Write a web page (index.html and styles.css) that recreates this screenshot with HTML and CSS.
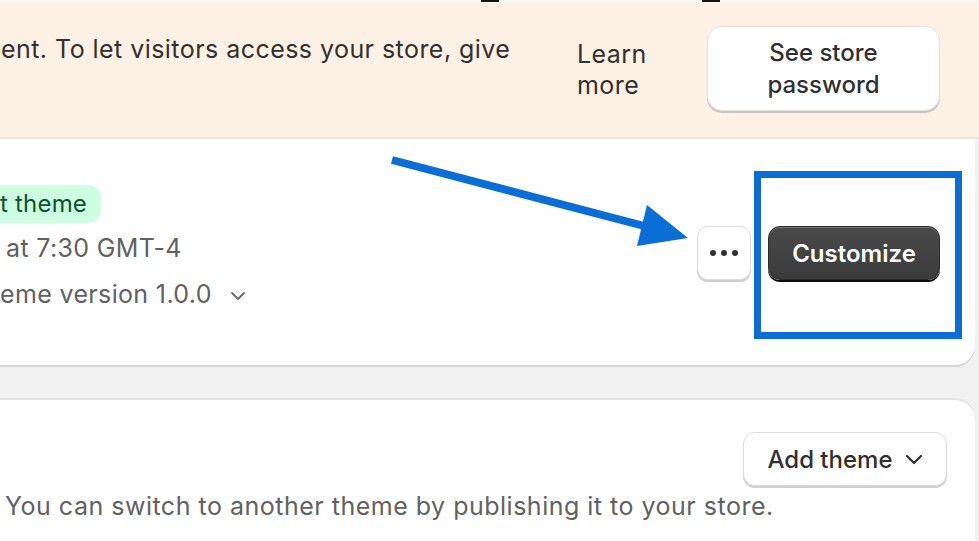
FILE: index.html
```html
<!DOCTYPE html>
<html lang="en">
<head>
<meta charset="utf-8">
<title>Themes</title>
<link rel="stylesheet" href="styles.css">
</head>
<body>
<div class="page">
  <div class="topstrip"><span class="mark mark-a"></span><span class="mark mark-b"></span></div>
  <div class="banner">
    <div class="banner-text">ent. To let visitors access your store, give</div>
    <div class="learn">Learn<br>more</div>
    <div class="pw-btn">See store<br>password</div>
  </div>
  <div class="divider"></div>
  <div class="card card-current">
    <div class="theme-info">
      <div class="badge">t theme</div>
      <div class="meta meta-saved">at 7:30 GMT-4</div>
      <div class="meta meta-version">eme version 1.0.0
        <svg class="chev" width="16" height="10" viewBox="0 0 16 10"><path d="M2 2 L8 8 L14 2" fill="none" stroke="#6b6b6b" stroke-width="2" stroke-linecap="round" stroke-linejoin="round"/></svg>
      </div>
    </div>
    <div class="actions">
      <div class="more-btn"><span class="dot"></span><span class="dot"></span><span class="dot"></span></div>
      <div class="primary-btn">Customize</div>
    </div>
  </div>
  <div class="card card-library">
    <div class="library-head">
      <div class="add-btn">Add theme
        <svg class="chev-add" width="18" height="11" viewBox="0 0 18 11"><path d="M2 2 L9 9 L16 2" fill="none" stroke="#303030" stroke-width="2.2" stroke-linecap="round" stroke-linejoin="round"/></svg>
      </div>
    </div>
    <div class="library-text">You can switch to another theme by publishing it to your store.</div>
  </div>

  <svg class="annot-arrow" width="979" height="541" viewBox="0 0 979 541">
    <line x1="392" y1="160" x2="648" y2="227" stroke="#0a6ed6" stroke-width="8"/>
    <polygon points="688,238 647,205 637,246" fill="#0a6ed6"/>
  </svg>
  <div class="annot-box"></div>
</div>
</body>
</html>
```
FILE: styles.css
```css
html, body {
  margin: 0;
  padding: 0;
}
body {
  background: #f1f1f1;
  font-family: Inter, "Noto Sans", "Liberation Sans", sans-serif;
  color: #303030;
}
.page {
  position: relative;
  width: 979px;
  height: 541px;
  overflow: hidden;
  background: #f1f1f1;
}
.topstrip {
  height: 3px;
  background: #fbf5ef;
  display: flex;
}
.mark {
  display: block;
  height: 2px;
  width: 18px;
  background: #1a1410;
}
.mark-a { margin-left: 481px; }
.mark-b { margin-left: 203px; }

.banner {
  height: 134px;
  background: #fdf0e4;
  display: flex;
  align-items: flex-start;
  font-size: 25px;
  letter-spacing: 0.45px;
  line-height: 31px;
  color: #33302d;
}
.banner-text {
  width: 577px;
  padding-top: 31px;
  white-space: nowrap;
  text-indent: 1px;
}
.learn {
  width: 130px;
  padding-top: 36px;
}
.pw-btn {
  margin-top: 23px;
  width: 233px;
  height: 85px;
  box-sizing: border-box;
  background: #fff;
  border-radius: 15px;
  border: 1px solid #e6e1dc;
  box-shadow: 0 2px 0 #c9c5c2;
  display: flex;
  align-items: center;
  justify-content: center;
  text-align: center;
  font-size: 24px;
  letter-spacing: 0;
  font-weight: 500;
  line-height: 32px;
  color: #303030;
}
.divider {
  height: 2px;
  background: #e9e5e1;
}
.card {
  background: #fff;
  margin-right: 4px;
}
.card-current {
  height: 226px;
  border-bottom-right-radius: 20px;
  box-shadow: 0 2px 0 #d5d5d5;
  display: flex;
  justify-content: space-between;
}
.theme-info {
  padding-top: 46px;
}
.badge {
  display: inline-block;
  height: 38px;
  line-height: 38px;
  padding: 0 14px 0 0;
  background: #cdfee1;
  color: #0c5132;
  font-size: 24px;
  letter-spacing: 0.2px;
  border-radius: 0 13px 13px 0;
}
.meta {
  font-size: 25px;
  letter-spacing: 0.35px;
  line-height: 31px;
  color: #616161;
  white-space: nowrap;
}
.meta-saved {
  margin-top: 10px;
  padding-left: 6px;
}
.meta-version {
  margin-top: 15px;
  display: flex;
  align-items: center;
}
.chev {
  margin-left: 18px;
  margin-top: 2px;
}
.actions {
  display: flex;
  align-items: center;
  gap: 17px;
  padding-right: 35px;
  padding-top: 86px;
  align-self: flex-start;
}
.more-btn {
  width: 54px;
  height: 54px;
  box-sizing: border-box;
  border: 1.5px solid #dcdcdc;
  border-radius: 11px;
  box-shadow: 0 2px 0 #cfcfcf;
  background: #fff;
  display: flex;
  align-items: center;
  justify-content: center;
  gap: 5px;
}
.dot {
  width: 6px;
  height: 6px;
  border-radius: 50%;
  background: #303030;
}
.primary-btn {
  width: 172px;
  height: 54px;
  box-sizing: border-box;
  border-radius: 12px;
  background: linear-gradient(#4a4a4a, #3b3b3b);
  border: 1px solid #2a2a2a;
  box-shadow: inset 0 1px 0 rgba(255,255,255,0.25), 0 2px 0 #0d0d0d;
  color: #fff;
  font-size: 24px;
  font-weight: 600;
  display: flex;
  align-items: center;
  justify-content: center;
  margin-top: 1px;
}
.card-library {
  margin-top: 35px;
  height: 200px;
  border-top-right-radius: 20px;
  box-shadow: 0 -2px 0 #e3e3e3;
}
.library-head {
  display: flex;
  justify-content: flex-end;
  padding-top: 32px;
  padding-right: 28px;
}
.add-btn {
  width: 204px;
  height: 54px;
  box-sizing: border-box;
  border: 1.5px solid #dcdcdc;
  border-radius: 12px;
  box-shadow: 0 2px 0 #cfcfcf;
  background: #fff;
  display: flex;
  align-items: center;
  justify-content: center;
  gap: 12px;
  font-size: 24px;
  font-weight: 500;
  color: #303030;
}
.library-text {
  margin-top: 5px;
  padding-left: 5px;
  font-size: 25px;
  letter-spacing: 0.5px;
  line-height: 31px;
  color: #616161;
  white-space: nowrap;
}
.annot-arrow {
  position: absolute;
  left: 0;
  top: 0;
  pointer-events: none;
}
.annot-box {
  position: absolute;
  left: 754px;
  top: 171px;
  width: 208px;
  height: 168px;
  box-sizing: border-box;
  border: 7px solid #0a6ed6;
  pointer-events: none;
}
```
